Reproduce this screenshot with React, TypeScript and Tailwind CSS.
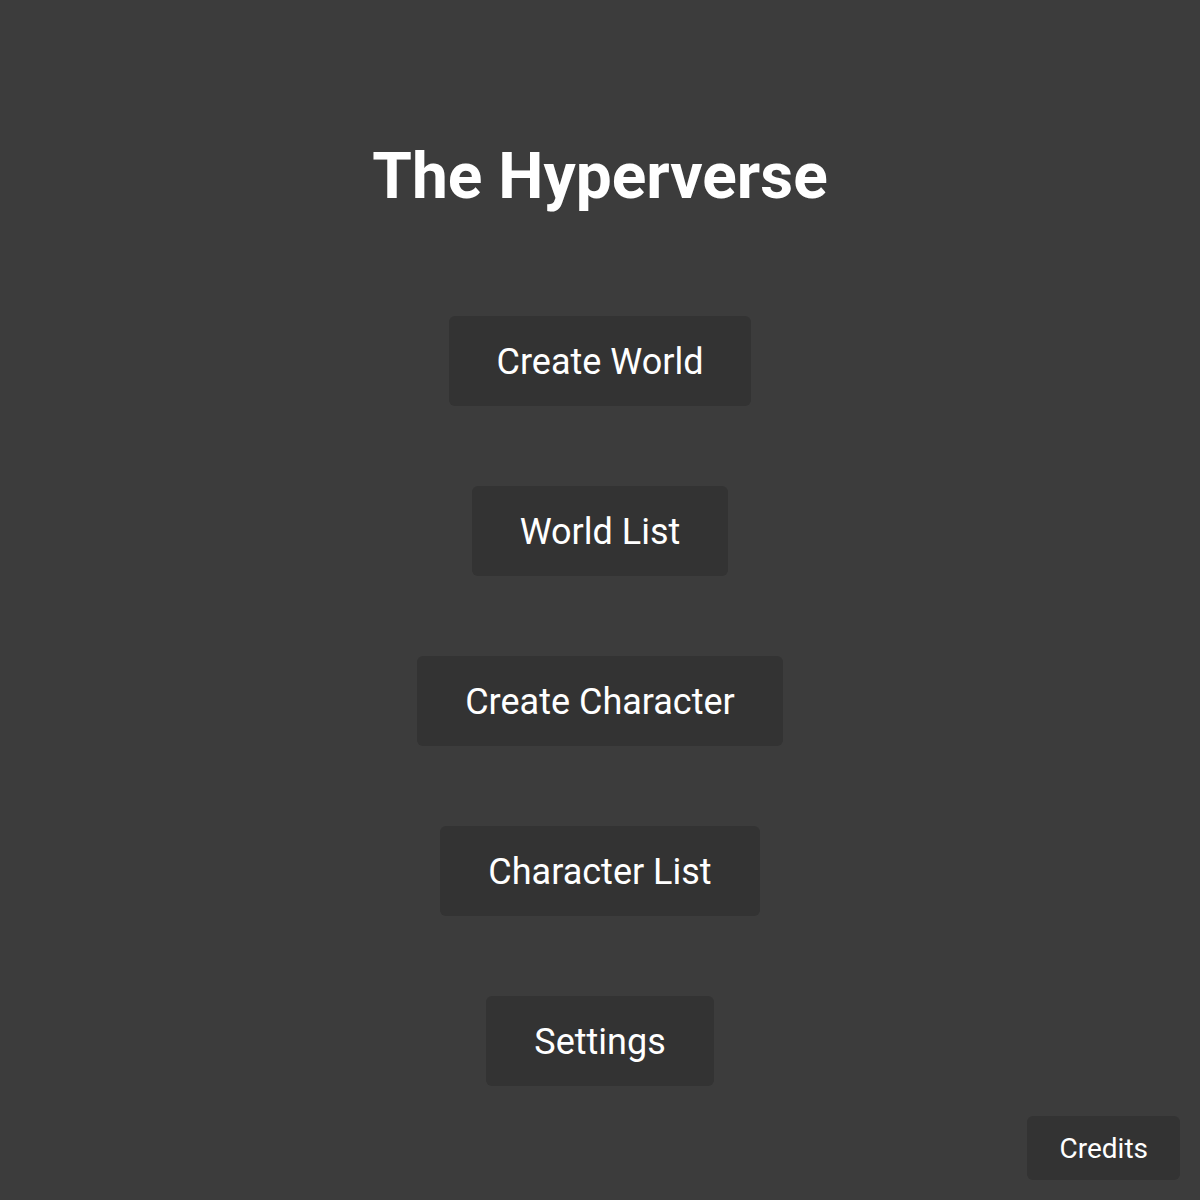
const items = ["Create World", "World List", "Create Character", "Character List", "Settings"];

export default function App() {
  return (
    <div className="relative min-h-screen w-full bg-[#3c3c3c] font-['Roboto',sans-serif] text-white">
      <div className="flex flex-col items-center pt-[129px]">
        <h1 className="text-[64px] font-bold leading-[96px]">The Hyperverse</h1>
        <div className="mt-[91px] flex flex-col items-center gap-[80px]">
          {items.map((label) => (
            <button
              key={label}
              className="rounded-md bg-[#333333] px-12 pt-[25px] pb-[23px] text-[36px] leading-[42px] text-white"
            >
              {label}
            </button>
          ))}
        </div>
      </div>
      <button className="absolute bottom-5 right-5 rounded-md bg-[#333333] px-8 pt-[17px] pb-[15px] text-[28px] leading-[32px] text-white">
        Credits
      </button>
    </div>
  );
}
